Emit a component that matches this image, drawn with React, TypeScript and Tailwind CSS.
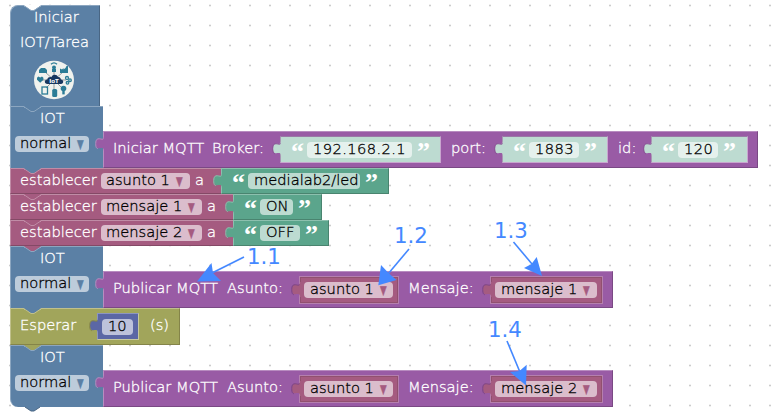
import type { ReactNode } from "react";

const FONT = "font-['DejaVu_Sans','Liberation_Sans',sans-serif]";

/* Puzzle tab that sticks out of the left edge of a value block. */
function Tab({ color, edge, className }: { color: string; edge: string; className: string }) {
  return (
    <svg className={`absolute -left-[9px] ${className}`} width="10" height="16" viewBox="0 0 10 16">
      <path d="M10 0 H9 C9 7 1 -2 1 7.5 S9 8 9 15 H10 Z" fill={color} />
      <path d="M8.6 2.6 C7.5 5 0.7 -1 0.7 7.5 C0.7 11.5 1.6 12.6 3 12.6" fill="none" stroke={edge} strokeWidth="1" />
    </svg>
  );
}

/* Connector of the block above, lying over the top edge of the next one. */
function Notch({ color, edge }: { color: string; edge: string }) {
  return (
    <svg className="absolute -top-px left-[13px]" width="17" height="7" viewBox="0 0 17 7">
      <path d="M0.5 0 V1.2 H1.2 L7 5.2 H10 L15.8 1.2 H16.5 V0 Z" fill={color} />
      <path d="M0 1.5 H1.2 L7 5.5 H10 L16 1.5 H17" fill="none" stroke={edge} />
    </svg>
  );
}

function Chip({ className, children }: { className: string; children: ReactNode }) {
  return (
    <span className={`block h-[16px] shrink-0 rounded-[4px] bg-white/60 leading-[13.5px] whitespace-pre text-black ${className}`}>
      {children}
    </span>
  );
}

function Arrow({ className }: { className: string }) {
  return <span className={`ml-px inline-block scale-x-90 scale-y-[1.3] ${className}`}>▾</span>;
}

function Label({ className, children }: { className: string; children: ReactNode }) {
  return <span className={`block h-[16px] shrink-0 leading-[14px] whitespace-pre ${className}`}>{children}</span>;
}

function Quote({ mark, className = "" }: { mark: string; className?: string }) {
  return (
    <span className={`mt-[4px] block h-[12px] w-[12px] shrink-0 font-['Liberation_Serif',serif] text-[26px] leading-[12px] font-bold text-white [-webkit-text-stroke:0px] ${className}`}>
      {mark}
    </span>
  );
}

function GreenText({ width, chip, children }: { width: string; chip: string; children: ReactNode }) {
  return (
    <div className={`relative flex h-[26px] items-center border-t border-r border-b border-l border-t-[#8cc0ae] border-r-[#49846f] border-b-[#49846f] border-l-[#8cc0ae] bg-[#5ba58c] pl-[10px] ${width}`}>
      <Tab color="#5ba58c" edge="#8cc0ae" className="top-[4px]" />
      <Quote mark="“" />
      <Chip className={`ml-[4px] pl-[6px] ${chip}`}>{children}</Chip>
      <Quote mark="”" className="ml-[5px]" />
    </div>
  );
}

function PaleText({ width, chip, children }: { width: string; chip: string; children: ReactNode }) {
  return (
    <div className={`relative flex h-[27px] shrink-0 items-center border border-t-[#9a79a6] border-r-[#c8a6cf] border-b-[#c8a6cf] border-l-[#a996b4] bg-[#bddbd1] pl-[10px] ${width}`}>
      <Tab color="#bddbd1" edge="#8a5295" className="top-[4px]" />
      <Quote mark="“" />
      <Chip className={`ml-[4px] pl-[6px] tracking-[0.4px] ${chip}`}>{children}</Chip>
      <Quote mark="”" className="ml-[5px]" />
    </div>
  );
}

function Variable({ width, chip, name }: { width: string; chip: string; name: string }) {
  return (
    <div className={`relative flex h-[28px] shrink-0 items-center border border-[#b57fae] bg-[#a55b80] ${width}`}>
      <div className="flex h-[26px] w-full items-center border border-[#91506f] pl-[3px]">
        <Chip className={`pl-[6px] ${chip}`}>
          {name} <Arrow className="text-[#a55b80]" />
        </Chip>
      </div>
      <Tab color="#a55b80" edge="#7d4586" className="top-[5px]" />
    </div>
  );
}

function Purple({ width, children }: { width: string; children: ReactNode }) {
  return (
    <div className={`relative mt-[25px] flex h-[37px] items-center border border-t-[#b88cc0] border-r-[#7a4984] border-b-[#7a4984] border-l-[#b88cc0] bg-[#995ba5] pl-[9px] ${width}`}>
      <Tab color="#995ba5" edge="#b88cc0" className="top-[4px]" />
      {children}
    </div>
  );
}

function IotRow({ above, last = false, children }: { above: string; last?: boolean; children: ReactNode }) {
  return (
    <div className="flex h-[62px]">
      <div
        className={`relative h-[62px] w-[93px] border-t border-l border-[#8ca6c0] bg-[#5b80a5] ${last ? "rounded-bl-[8px]" : ""}`}
      >
        <Notch color={above} edge="#8ca6c0" />
        <Label className="mt-[4px] ml-[29px]">IOT</Label>
        <Chip className="mt-[9px] ml-[4px] w-[74px] pl-[5px]">
          normal <Arrow className="text-[#5b80a5]" />
        </Chip>
        {last && (
          <svg className="absolute top-[60px] left-[13px]" width="17" height="6" viewBox="0 0 17 6">
            <path d="M0 0 H17 V1 H16 L10 5 H7 L1 1 H0 Z" fill="#5b80a5" />
            <path d="M1 1 L7 5 H10 L16 1" fill="none" stroke="#496684" />
          </svg>
        )}
      </div>
      {children}
    </div>
  );
}

function SetRow({ above, name, width, chip, children }: { above: string; name: string; width: string; chip: string; children: ReactNode }) {
  return (
    <div className="flex h-[26px]">
      <div className={`relative flex h-[26px] items-center border-t border-b border-l border-t-[#c08ca6] border-b-[#844966] border-l-[#c08ca6] bg-[#a55b80] pl-[9px] ${width}`}>
        <Notch color={above} edge="#c08ca6" />
        <Label className="w-[81px]">establecer</Label>
        <Chip className={`pl-[5px] ${chip}`}>
          {name} <Arrow className="text-[#a55b80]" />
        </Chip>
        <Label className="ml-[5px]">a</Label>
      </div>
      {children}
    </div>
  );
}

function Publish({ name }: { name: string }) {
  return (
    <Purple width="w-[510px]">
      <Label className="-mt-[2px] w-[114px]">Publicar MQTT</Label>
      <Label className="-mt-[2px] w-[72px]">Asunto:</Label>
      <Variable width="w-[100px]" chip="w-[89px]" name="asunto 1" />
      <Label className="-mt-[2px] ml-[9px] w-[82px]">Mensaje:</Label>
      <Variable width="w-[113px]" chip="w-[102px]" name={name} />
    </Purple>
  );
}

function IotIcon() {
  return (
    <svg className="mt-[9px] ml-[22px]" width="42" height="40" viewBox="0 0 42 40">
      <ellipse cx="21" cy="20" rx="20" ry="19.3" fill="#f0f2ee" />
      <g stroke="#8a9092" strokeWidth="0.9">
        <path d="M21 20 V9 M21 20 V31 M21 20 H9 M21 20 H33 M21 20 L12 12 M21 20 L30 12 M21 20 L13 28 M21 20 L29 28" />
      </g>
      <g fill="#2b7c96">
        <path d="M6 13 V10 L8 8 H12 L14 10 V13 Z" />
        <path d="M27 13 V8.5 L29 9.5 L30.5 8 V9.5 L32.5 8 L33.5 6 H35 V13 Z" />
        <path d="M7.2 22.8 L4 19.8 V17.8 L5.4 16.6 L7.2 17.6 L9 16.6 L10.4 17.8 V19.8 Z" />
        <circle cx="30.5" cy="28.5" r="2.8" />
        <rect x="29.3" y="31" width="2.4" height="3.4" />
        <rect x="19.2" y="29" width="5" height="8" rx="1.5" />
        <circle cx="21" cy="7.5" r="2" />
        <path d="M19 9 H23 V12 H19 Z" />
      </g>
      <g fill="none" stroke="#2b7c96" strokeWidth="1.3">
        <rect x="9" y="27" width="5.5" height="7" />
        <path d="M18 4.2 C20 2.4 22 2.4 24 4.2" />
        <circle cx="34" cy="18" r="1.5" />
        <circle cx="37" cy="20.2" r="1.3" />
        <circle cx="34.5" cy="22.8" r="1.3" />
      </g>
      <path d="M14.5 24 C11 24 11 19.5 14.3 19.5 C14.6 17.3 17 16.8 18.3 17.3 C19.5 14 24 14 25 17 C27.2 16.8 28 18.5 27.8 19.5 C31 19.5 31 24 28 24 Z" fill="#18375f" />
      <text x="21" y="22.7" textAnchor="middle" fontSize="5.5" fontWeight="bold" fill="#fff" fontFamily="DejaVu Sans">IoT</text>
    </svg>
  );
}

function Note({ className, children }: { className: string; children: ReactNode }) {
  return (
    <span className={`absolute text-[21.3px] leading-[24px] font-normal text-[#4488ff] [-webkit-text-stroke:0px] ${className}`}>
      {children}
    </span>
  );
}

export default function App() {
  return (
    <div className={`relative h-[415px] w-[778px] overflow-hidden bg-white pt-[5px] pl-[10px] text-[14.67px] font-extralight text-white [-webkit-text-stroke:0.3px] ${FONT}`}>
      <svg className="absolute inset-0" width="778" height="415">
        <defs>
          <pattern id="dots" x="0" y="-5" width="20" height="20" patternUnits="userSpaceOnUse">
            <path d="M9 10.5 H11 M10 9.5 V11.5" stroke="#cccccc" strokeWidth="1.2" />
          </pattern>
        </defs>
        <rect width="778" height="415" fill="url(#dots)" />
      </svg>

      <div className="relative flex flex-col">
        <div className="relative h-[101px] w-[90px] rounded-tl-[8px] border-t border-r border-l border-t-[#8ca6c0] border-r-[#496684] border-l-[#8ca6c0] bg-[#5b80a5]">
          <Notch color="#ffffff" edge="#8ca6c0" />
          <Label className="mt-[4px] ml-[23px]">Iniciar</Label>
          <Label className="mt-[9px] ml-[9px]">IOT/Tarea</Label>
          <IotIcon />
        </div>

        <IotRow above="#5b80a5">
          <Purple width="w-[655px]">
            <Label className="-mt-[2px] w-[99px]">Iniciar MQTT</Label>
            <Label className="-mt-[2px] w-[68px]">Broker:</Label>
            <PaleText width="w-[161px]" chip="w-[105px]">192.168.2.1</PaleText>
            <Label className="-mt-[2px] ml-[10px] w-[51px]">port:</Label>
            <PaleText width="w-[106px]" chip="w-[50px]">1883</PaleText>
            <Label className="-mt-[2px] ml-[10px] w-[33px]">id:</Label>
            <PaleText width="w-[97px]" chip="w-[40px]">120</PaleText>
          </Purple>
        </IotRow>

        <SetRow above="#5b80a5" name="asunto 1" width="w-[211px]" chip="w-[89px]">
          <GreenText width="w-[168px]" chip="w-[112px]">medialab2/led</GreenText>
        </SetRow>
        <SetRow above="#a55b80" name="mensaje 1" width="w-[223px]" chip="w-[101px]">
          <GreenText width="w-[89px]" chip="w-[33px]">ON</GreenText>
        </SetRow>
        <SetRow above="#a55b80" name="mensaje 2" width="w-[223px]" chip="w-[101px]">
          <GreenText width="w-[96px]" chip="w-[40px]">OFF</GreenText>
        </SetRow>

        <IotRow above="#a55b80">
          <Publish name="mensaje 1" />
        </IotRow>

        <div className="relative flex h-[37px] w-[170px] items-center border border-t-[#c0c08c] border-r-[#848449] border-b-[#848449] border-l-[#c0c08c] bg-[#a1a55b] pl-[9px]">
          <Notch color="#5b80a5" edge="#c0c08c" />
          <Label className="-mt-[2px] w-[77px]">Esperar</Label>
          <div className="relative flex h-[27px] w-[42px] items-center border border-t-[#8c95c0] border-r-[#c7c99d] border-b-[#c7c99d] border-l-[#8c95c0] bg-[#5b67a5] pl-[4px]">
            <Tab color="#5b67a5" edge="#848449" className="top-[4px]" />
            <Chip className="w-[31px] pl-[6px]">10</Chip>
          </div>
          <Label className="-mt-[2px] ml-[11px]">(s)</Label>
        </div>

        <IotRow above="#a1a55b" last>
          <Publish name="mensaje 2" />
        </IotRow>
      </div>

      <svg className="absolute inset-0" width="778" height="415">
        <g stroke="#4488ff" strokeWidth="1.6">
          <path d="M244 257 L212 273" />
          <path d="M409 249 L388 274" />
          <path d="M513.5 242 L532 264" />
          <path d="M507 341 L519.5 371" />
        </g>
        <g fill="#4488ff">
          <path d="M197 281.5 L211.5 263 L213 273 L221 281 Z" />
          <path d="M378.3 285.3 L381 265 L388.5 273 L396.5 280 Z" />
          <path d="M542 276 L536.7 257 L531.5 264 L524 268 Z" />
          <path d="M526 385.5 L526.7 364.7 L519.5 371 L510 372 Z" />
        </g>
      </svg>
      <Note className="top-[245px] left-[247px]">1.1</Note>
      <Note className="top-[224px] left-[394px]">1.2</Note>
      <Note className="top-[219px] left-[494px]">1.3</Note>
      <Note className="top-[318px] left-[488px]">1.4</Note>
    </div>
  );
}
